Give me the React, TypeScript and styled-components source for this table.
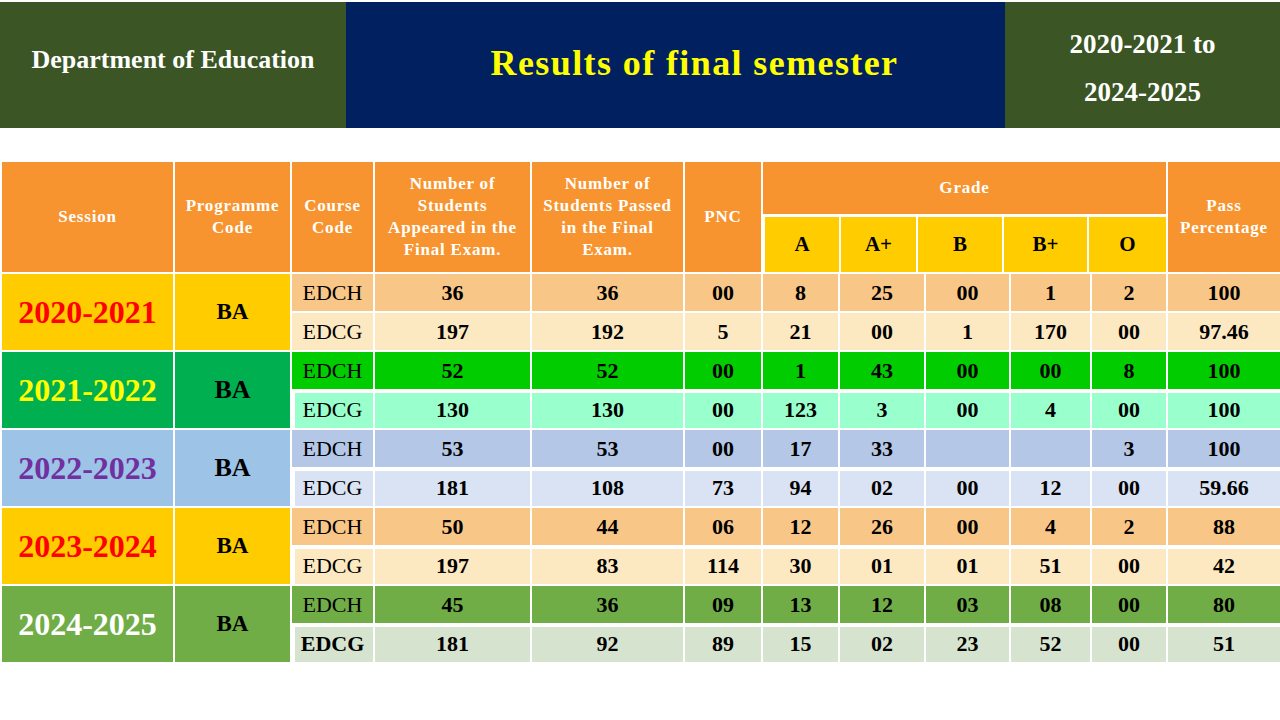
import * as React from 'react'
import styled, { createGlobalStyle } from 'styled-components'

const GlobalStyle = createGlobalStyle`
  html, body {
    margin: 0;
    padding: 0;
    background: #ffffff;
  }
  body {
    font-family: "Liberation Serif", "Times New Roman", serif;
    width: 1280px;
    height: 720px;
    overflow: hidden;
  }
`

const Page = styled('div')`
  width: 1280px;
  padding-top: 2px;
`

const Banner = styled('header')`
  display: grid;
  grid-template-columns: 346px 659px 275px;
  height: 126px;
`

const BannerBlock = styled('div')<{ $bg: string }>`
  display: flex;
  flex-direction: column;
  align-items: center;
  justify-content: center;
  background: ${p => p.$bg};
  font-weight: bold;
`

const DeptName = styled('div')`
  color: #ffffff;
  font-size: 26px;
  margin-top: -10px;
`

const Title = styled('h1')`
  margin: -4px 0 0 38px;
  color: #ffff00;
  font-size: 36px;
  letter-spacing: 1.4px;
  font-weight: bold;
`

const Period = styled('div')`
  color: #ffffff;
  font-size: 27px;
  line-height: 48px;
  text-align: center;
  margin-top: 6px;
`

const Table = styled('div')`
  display: grid;
  grid-template-columns: 171px 115px 81px 155px 151px 76px 75px 84px 83px 79px 74px 112px;
  grid-template-rows: 52px 56px repeat(10, 37px);
  gap: 2px;
  margin: 34px 0 0 2px;
  width: 1278px;
`

const HeadCell = styled('div')<{ $col: string; $row?: string }>`
  grid-column: ${p => p.$col};
  grid-row: ${p => p.$row ?? '1 / 3'};
  display: flex;
  align-items: center;
  justify-content: center;
  text-align: center;
  background: #f7942f;
  color: #ffffff;
  font-weight: bold;
  font-size: 17px;
  letter-spacing: 0.8px;
  line-height: 22px;
  padding: 0 4px;
`

const GradeBox = styled('div')`
  grid-column: 7 / 12;
  grid-row: 2;
  display: grid;
  grid-template-columns: 74px 75px 84px 83px 77px;
  gap: 2px;
  padding: 2px 2px 0 2px;
  margin-top: -1px;
  background: #ffffff;
`

const GradeCell = styled('div')`
  display: flex;
  align-items: center;
  justify-content: center;
  background: #ffcc00;
  color: #000000;
  font-weight: bold;
  font-size: 21px;
`

const SessionCell = styled('div')<{ $row: number; $bg: string; $fg: string }>`
  grid-column: 1;
  grid-row: ${p => p.$row} / span 2;
  display: flex;
  align-items: center;
  justify-content: center;
  background: ${p => p.$bg};
  color: ${p => p.$fg};
  font-weight: bold;
  font-size: 32px;
`

const ProgCell = styled('div')<{ $row: number; $bg: string; $size: number }>`
  grid-column: 2;
  grid-row: ${p => p.$row} / span 2;
  display: flex;
  align-items: center;
  justify-content: center;
  background: ${p => p.$bg};
  color: #000000;
  font-weight: bold;
  font-size: ${p => p.$size}px;
`

const CourseCell = styled('div')<{ $bg: string; $bold?: boolean; $notch?: boolean }>`
  display: flex;
  align-items: center;
  justify-content: center;
  background: ${p => p.$bg};
  color: #000000;
  font-size: 22px;
  font-weight: ${p => (p.$bold ? 'bold' : 'normal')};
  box-shadow: ${p => (p.$notch ? 'inset 3px 2px 0 #ffffff' : 'none')};
`

const ValueCell = styled('div')<{ $bg: string; $notch?: boolean }>`
  display: flex;
  align-items: center;
  justify-content: center;
  background: ${p => p.$bg};
  color: #000000;
  font-size: 22px;
  font-weight: bold;
  box-shadow: ${p => (p.$notch ? 'inset 0 2px 0 #ffffff' : 'none')};
`

interface ICourseRow {
  code: string
  bg: string
  values: string[]
  bold?: boolean
}

interface ISessionGroup {
  session: string
  sessionBg: string
  sessionFg: string
  progSize: number
  notch: boolean
  rows: ICourseRow[]
}

const PEACH = '#f8c788'
const CREAM = '#fce9c1'

const groups: ISessionGroup[] = [
  {
    session: '2020-2021',
    sessionBg: '#ffcc00',
    sessionFg: '#ff0000',
    progSize: 23,
    notch: false,
    rows: [
      { code: 'EDCH', bg: PEACH, values: ['36', '36', '00', '8', '25', '00', '1', '2', '100'] },
      { code: 'EDCG', bg: CREAM, values: ['197', '192', '5', '21', '00', '1', '170', '00', '97.46'] }
    ]
  },
  {
    session: '2021-2022',
    sessionBg: '#00b050',
    sessionFg: '#ffff00',
    progSize: 26,
    notch: true,
    rows: [
      { code: 'EDCH', bg: '#00cc00', values: ['52', '52', '00', '1', '43', '00', '00', '8', '100'] },
      { code: 'EDCG', bg: '#99ffcc', values: ['130', '130', '00', '123', '3', '00', '4', '00', '100'] }
    ]
  },
  {
    session: '2022-2023',
    sessionBg: '#9dc3e6',
    sessionFg: '#7030a0',
    progSize: 26,
    notch: true,
    rows: [
      { code: 'EDCH', bg: '#b4c7e7', values: ['53', '53', '00', '17', '33', '', '', '3', '100'] },
      { code: 'EDCG', bg: '#dae3f3', values: ['181', '108', '73', '94', '02', '00', '12', '00', '59.66'] }
    ]
  },
  {
    session: '2023-2024',
    sessionBg: '#ffcc00',
    sessionFg: '#ff0000',
    progSize: 23,
    notch: true,
    rows: [
      { code: 'EDCH', bg: PEACH, values: ['50', '44', '06', '12', '26', '00', '4', '2', '88'] },
      { code: 'EDCG', bg: CREAM, values: ['197', '83', '114', '30', '01', '01', '51', '00', '42'] }
    ]
  },
  {
    session: '2024-2025',
    sessionBg: '#70ad47',
    sessionFg: '#ffffff',
    progSize: 23,
    notch: true,
    rows: [
      { code: 'EDCH', bg: '#70ad47', values: ['45', '36', '09', '13', '12', '03', '08', '00', '80'] },
      { code: 'EDCG', bg: '#d6e3cf', values: ['181', '92', '89', '15', '02', '23', '52', '00', '51'], bold: true }
    ]
  }
]

const grades = ['A', 'A+', 'B', 'B+', 'O']

export default function App () {
  return (
    <Page>
      <GlobalStyle />
      <Banner>
        <BannerBlock $bg='#3b5524'>
          <DeptName>Department of Education</DeptName>
        </BannerBlock>
        <BannerBlock $bg='#002060'>
          <Title>Results of final semester</Title>
        </BannerBlock>
        <BannerBlock $bg='#3b5524'>
          <Period>2020-2021 to<br />2024-2025</Period>
        </BannerBlock>
      </Banner>

      <Table>
        <HeadCell $col='1'>Session</HeadCell>
        <HeadCell $col='2'>Programme Code</HeadCell>
        <HeadCell $col='3'>Course Code</HeadCell>
        <HeadCell $col='4'>Number of Students Appeared in the Final Exam.</HeadCell>
        <HeadCell $col='5'>Number of Students Passed in the Final Exam.</HeadCell>
        <HeadCell $col='6'>PNC</HeadCell>
        <HeadCell $col='7 / 12' $row='1'>Grade</HeadCell>
        <GradeBox>
          { grades.map(g => <GradeCell key={g}>{g}</GradeCell>) }
        </GradeBox>
        <HeadCell $col='12'>Pass Percentage</HeadCell>

        { groups.map((group, gi) => {
          const row = 3 + gi * 2
          return (
            <React.Fragment key={group.session}>
              <SessionCell $row={row} $bg={group.sessionBg} $fg={group.sessionFg}>{group.session}</SessionCell>
              <ProgCell $row={row} $bg={group.sessionBg} $size={group.progSize}>BA</ProgCell>
              { group.rows.map((r, ri) => {
                const notch = group.notch && ri === 1
                return (
                  <React.Fragment key={r.code}>
                    <CourseCell $bg={r.bg} $bold={r.bold} $notch={notch} style={{ gridRow: row + ri, gridColumn: 3 }}>{r.code}</CourseCell>
                    { r.values.map((v, vi) => (
                      <ValueCell key={vi} $bg={r.bg} $notch={notch} style={{ gridRow: row + ri, gridColumn: 4 + vi }}>{v}</ValueCell>
                    ))}
                  </React.Fragment>
                )
              })}
            </React.Fragment>
          )
        })}
      </Table>
    </Page>
  )
}
